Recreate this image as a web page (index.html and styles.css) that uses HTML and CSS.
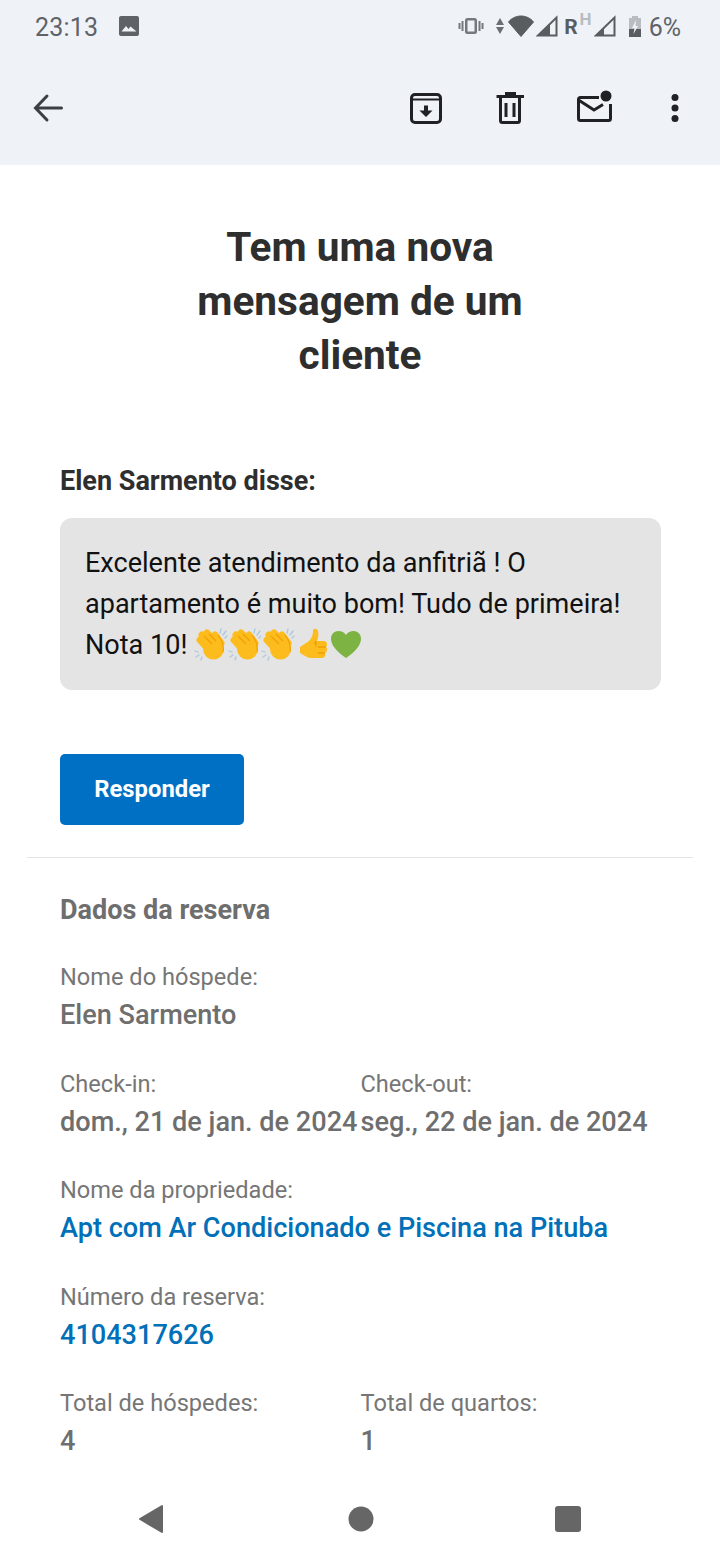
FILE: index.html
```html
<!DOCTYPE html>
<html lang="pt">
<head>
<meta charset="utf-8">
<title>Mensagem</title>
<link rel="stylesheet" href="styles.css">
</head>
<body>
<div class="phone">
  <header class="top">
    <div class="status">
      <div class="status-left">
        <span class="time">23:13</span>
        <svg class="pic" width="22" height="22" viewBox="0 0 22 22"><rect x="1" y="1" width="20" height="20" rx="2" fill="#5f6368"/><path d="M3.500 16.500 8 11l2.500 3 2-2.500 6 5z" fill="#eff3f8"/></svg>
      </div>
      <div class="status-right">
        <svg class="vib" width="26" height="20" viewBox="0 0 26 20"><g fill="#75787c"><rect x="7" y="2" width="12" height="16" rx="2.500"/><rect x="3.500" y="5" width="2" height="10"/><rect x="20.500" y="5" width="2" height="10"/><rect x="0.500" y="7" width="2" height="6"/><rect x="23.500" y="7" width="2" height="6"/></g><rect x="9.500" y="4.500" width="7" height="11" fill="#eff3f8"/></svg>
        <svg class="updown" width="10" height="18" viewBox="0 0 10 18"><path d="M5 1 9 8H1zM5 17 1 10h8z" fill="#6b6e72"/></svg>
        <svg class="wifi" width="26" height="22" viewBox="0 0 26 22"><path d="M13 21.500 0.500 7C3 3.500 8 1 13 1s10 2.500 12.500 6z" fill="#5a5d60" stroke="#5a5d60" stroke-linejoin="round"/></svg>
        <svg class="sig" width="22" height="22" viewBox="0 0 22 22"><path d="M20.500 2.500v18H2z" fill="none" stroke="#5a5d60" stroke-width="2"/><path d="M14 9v12H1z" fill="#5a5d60"/></svg>
        <span class="roam">R</span>
        <span class="hsup">H</span>
        <svg class="sig2" width="22" height="22" viewBox="0 0 22 22"><path d="M20.500 2.500v18H2z" fill="none" stroke="#5a5d60" stroke-width="2"/><path d="M10 13v8H1z" fill="#5a5d60"/></svg>
        <svg class="batt" width="14" height="22" viewBox="0 0 14 22"><path d="M1 3h12v19H1z" fill="#b9bdc1"/><rect x="4" y="1" width="6" height="2" fill="#b9bdc1"/><path d="M1 14h12v8H1z" fill="#5a5d60"/><path d="M8 5 4 13h2.500L5.500 19 10 11H7.500z" fill="#eff3f8"/></svg>
        <span class="pct">6%</span>
      </div>
    </div>
    <div class="toolbar">
      <svg class="back" width="32" height="32" viewBox="0 0 32 32"><path d="M29.500 16H4M15 4 3.500 16 15 28" fill="none" stroke="#3c4043" stroke-width="3" stroke-linecap="round"/></svg>
      <div class="actions">
        <svg width="36" height="36" viewBox="0 0 36 36"><rect x="3.500" y="4.500" width="29" height="28" rx="3.500" fill="none" stroke="#202124" stroke-width="3"/><path d="M3 9.500h30" stroke="#202124" stroke-width="2"/><path d="M16 15.500h4v5h4.500L18 27l-6.500-6.500H16z" fill="#202124"/></svg>
        <svg class="act-trash" width="36" height="36" viewBox="0 0 36 36"><path d="M8.500 6.500v24a2 2 0 0 0 2 2h15a2 2 0 0 0 2-2v-24" fill="none" stroke="#202124" stroke-width="3"/><path d="M4.500 6.500h27.500M13 3.500h11" stroke="#202124" stroke-width="3"/><path d="M14 13v14M22 13v14" stroke="#202124" stroke-width="3"/></svg>
        <svg class="act-mail" width="40" height="36" viewBox="0 0 40 36"><path d="M25 7.500H6.500a2 2 0 0 0-2 2v19a2 2 0 0 0 2 2h28a2 2 0 0 0 2-2V14" fill="none" stroke="#202124" stroke-width="3"/><path d="M4.500 10 20 20l9-5.500" fill="none" stroke="#202124" stroke-width="3"/><circle cx="32" cy="6" r="5.500" fill="#202124"/></svg>
        <svg class="act-more" width="12" height="32" viewBox="0 0 12 32"><circle cx="6" cy="5.500" r="3.500" fill="#202124"/><circle cx="6" cy="16" r="3.500" fill="#202124"/><circle cx="6" cy="26.500" r="3.500" fill="#202124"/></svg>
      </div>
    </div>
  </header>
  <main class="mail">
    <h1 class="title">Tem uma nova mensagem de um cliente</h1>
    <p class="said">Elen Sarmento disse:</p>
    <div class="bubble">Excelente atendimento da anfitriã ! O apartamento é muito bom! Tudo de primeira! Nota 10!
      <span class="emojis">
        <svg width="33.500" height="34" viewBox="0 0 33.500 34"><use href="#clap"/></svg><svg width="33.500" height="34" viewBox="0 0 33.500 34"><use href="#clap"/></svg><svg width="33.500" height="34" viewBox="0 0 33.500 34"><use href="#clap"/></svg><svg width="33.500" height="34" viewBox="0 0 33.500 34"><path d="M5 20 14 14C17 11 18 7 18 4 18 1 22 1 23 4 24 8 23 11 22 14H29C32 14 33 18 31 20 33 22 32 25 30 26 31 28 30 30 28 31H16C12 31 9 28 5 26Z" fill="#fdbc1e"/><path d="M23 20H31M23 26H30" stroke="#f0a000" stroke-width="1.500"/><path d="M19 15 22 14 21 21z" fill="#f0a000"/></svg><svg width="34" height="34" viewBox="0 0 34 34"><path d="M18 31C8 24 3 18 3 11.500 3 7 6.500 4 10.500 4 13.500 4 16.500 5.500 18 8 19.500 5.500 22.500 4 25.500 4 29.500 4 33 7 33 11.500 33 18 28 24 18 31z" fill="#7cb342"/></svg>
      </span>
    </div>
    <a class="reply">Responder</a>
    <hr class="rule">
    <section class="details">
      <h2 class="details-title">Dados da reserva</h2>
      <div class="field"><div class="label">Nome do hóspede:</div><div class="value">Elen Sarmento</div></div>
      <div class="pair">
        <div class="field"><div class="label">Check-in:</div><div class="value">dom., 21 de jan. de 2024</div></div>
        <div class="field"><div class="label">Check-out:</div><div class="value">seg., 22 de jan. de 2024</div></div>
      </div>
      <div class="field"><div class="label">Nome da propriedade:</div><div class="value link">Apt com Ar Condicionado e Piscina na Pituba</div></div>
      <div class="field"><div class="label">Número da reserva:</div><div class="value link">4104317626</div></div>
      <div class="pair">
        <div class="field"><div class="label">Total de hóspedes:</div><div class="value">4</div></div>
        <div class="field"><div class="label">Total de quartos:</div><div class="value">1</div></div>
      </div>
    </section>
  </main>
  <nav class="navbar">
    <svg width="30" height="32" viewBox="0 0 30 32"><path d="M25 3v26L3 16z" fill="#666" stroke="#666" stroke-width="2" stroke-linejoin="round"/></svg>
    <svg width="26" height="26" viewBox="0 0 26 26"><circle cx="13" cy="13" r="12.500" fill="#666"/></svg>
    <svg width="28" height="28" viewBox="0 0 28 28"><rect x="1" y="1" width="26" height="26" rx="3" fill="#666"/></svg>
  </nav>
</div>
<svg class="defs" width="0" height="0"><defs><g id="clap"><path d="M26 6 27 2M29 8 32 4M31 11 33 9M1 24 4 25M2 30 5 28M7 33 8 30" stroke="#aac8de" stroke-width="1.300" stroke-linecap="round"/><g fill="none" stroke="#fdbc1e" stroke-width="7" stroke-linecap="round"><path d="M6 13 15 23M8 8 19 19M13 6 24 17M21 8 27 16"/></g><circle cx="19.500" cy="22" r="10.500" fill="#fdbc1e"/><path d="M10 9 18 17M15 7 22 14M24 8c4 5 6 11 5 17" fill="none" stroke="#f0a000" stroke-width="1.200"/></g></defs></svg>
</body>
</html>
```
FILE: styles.css
```css
* { box-sizing: border-box; }
html, body { margin: 0; padding: 0; }
body { width: 720px; height: 1560px; overflow: hidden; background: #fff; font-family: Roboto, "Noto Sans", sans-serif; }
.phone { width: 720px; height: 1560px; display: flex; flex-direction: column; }
.top { background: #eff3f8; height: 165px; flex: none; }
.status { height: 55px; padding: 0 39px 3px 35px; display: flex; justify-content: space-between; align-items: center; color: #5f6368; }
.status-left { display: flex; align-items: center; gap: 20px; }
.time { font-size: 25px; letter-spacing: 0.2px; margin-top: 2px; }
.status-right { display: flex; align-items: center; }
.updown { margin-left: 11px; }
.wifi { margin-left: 3px; }
.sig { margin-left: 2px; }
.roam { margin: 2px 0 0 6px; font-size: 21px; font-weight: 700; color: #5a5d60; }
.hsup { font-size: 17px; font-weight: 700; color: #b8bcc0; margin: -14px 0 0 2px; }
.sig2 { margin-left: 2px; }
.batt { margin-left: 12px; }
.pct { margin-left: 7px; font-size: 25px; margin-top: 2px; }
.toolbar { height: 110px; padding: 0 39px 5px 32px; display: flex; align-items: center; justify-content: space-between; }
.actions { display: flex; align-items: center; }
.act-trash { margin-left: 48px; }
.act-mail { margin-left: 46px; }
.act-more { margin-left: 55px; }
.mail { flex: 1; min-height: 0; overflow: hidden; padding-top: 55px; }
.title { width: 400px; margin: 0 auto; font-size: 40.600px; line-height: 54px; font-weight: 700; color: #2e2e2e; text-align: center; }
.said { margin: 83px 60px 0; font-size: 27px; line-height: 32px; font-weight: 700; color: #2e2e2e; }
.bubble { margin: 21px 59px 0 60px; padding: 25px 25px 0; height: 172px; border-radius: 12px; background: #e4e4e4; color: #111; font-size: 27.050px; line-height: 41px; }
.emojis { display: inline-flex; vertical-align: -7px; }
.reply { display: block; margin: 64px 0 0 60px; width: 184px; height: 71px; border-radius: 5px; background: #0070c4; color: #fff; font-size: 23.800px; font-weight: 700; line-height: 70px; text-align: center; }
.rule { margin: 32px 27px 0; border: 0; border-top: 1px solid #e4e4e4; }
.details { padding: 0 60px; color: #6b6b6b; }
.details-title { margin: 34px 0 1px; font-size: 27px; line-height: 36px; font-weight: 700; color: #6e6e6e; }
.field { margin-top: 31.400px; }
.label { font-size: 23.600px; line-height: 37px; color: #767676; }
.value { font-size: 27.100px; line-height: 38px; font-weight: 500; color: #6e6e6e; white-space: nowrap; }
.link { color: #0070b8; }
.pair { display: grid; grid-template-columns: 300.500px 1fr; }
.navbar { height: 82px; flex: none; background: #fff; display: flex; align-items: center; justify-content: space-between; padding: 0 138px 0 137px; }
.defs { position: absolute; }
```
